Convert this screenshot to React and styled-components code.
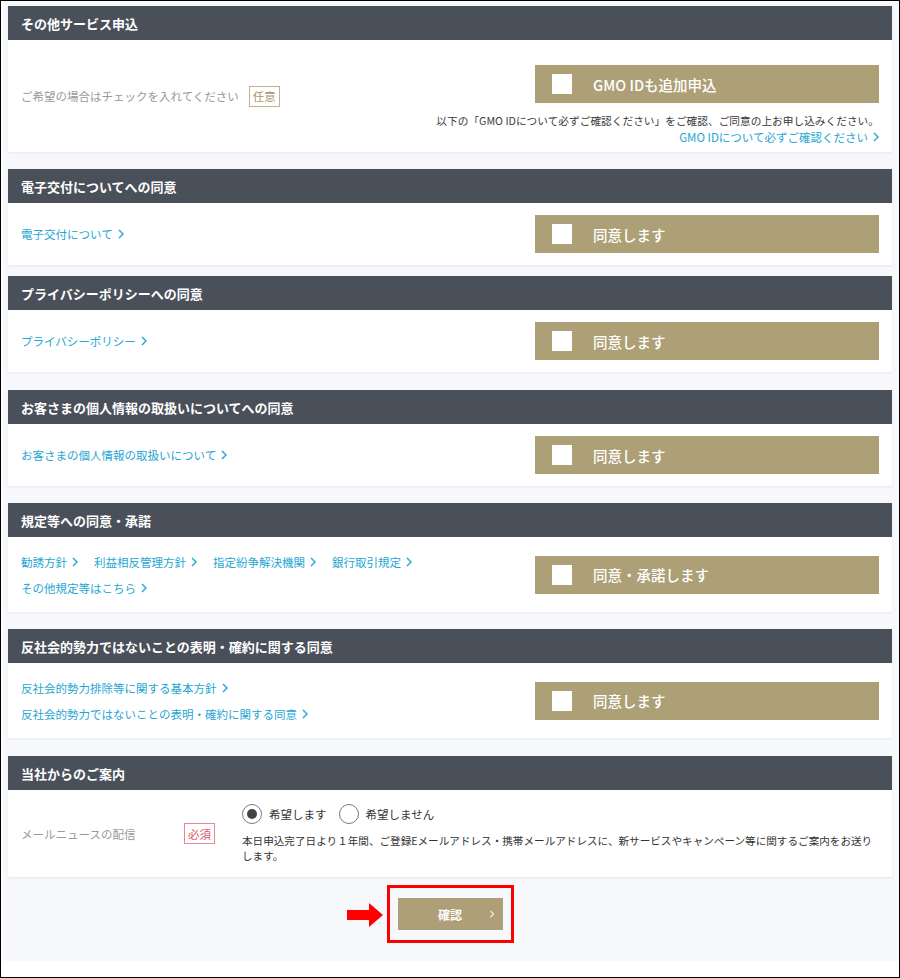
import React from 'react'
import styled, { createGlobalStyle } from 'styled-components'

const GlobalStyle = createGlobalStyle`
  html, body {
    margin: 0;
    padding: 0;
    background: #fff;
  }
  body {
    font-family: "Noto Sans CJK JP", "Noto Sans", sans-serif;
  }
`

const Chevron = ({ color = '#1fa6d4' }) => (
    <svg width="6" height="10" viewBox="0 0 6 10">
        <path d="M1 1 L5 5 L1 9" fill="none" stroke={color} strokeWidth="1.4" />
    </svg>
)

function CheckButton({ label }) {
    return (
        <AgreeButton type="button">
            <Box />
            <span>{label}</span>
        </AgreeButton>
    )
}

function Links({ items }) {
    return (
        <LinkRow>
            {items.map((t) => (
                <LinkItem key={t}>
                    {t}
                    <Chevron />
                </LinkItem>
            ))}
        </LinkRow>
    )
}

function Radio({ checked, label }) {
    return (
        <RadioItem>
            <Circle $checked={checked} />
            {label}
        </RadioItem>
    )
}

export default function App() {
    return (
        <Frame>
            <GlobalStyle />
            <Page>
                <Card>
                    <Header>その他サービス申込</Header>
                    <Body $h={112}>
                        <Label>
                            ご希望の場合はチェックを入れてください
                            <Badge>任意</Badge>
                        </Label>
                        <RightCol>
                            <CheckButton label="GMO IDも追加申込" />
                            <Note>以下の「GMO IDについて必ずご確認ください」をご確認、ご同意の上お申し込みください。</Note>
                            <LinkItem>
                                GMO IDについて必ずご確認ください
                                <Chevron />
                            </LinkItem>
                        </RightCol>
                    </Body>
                </Card>

                <Card>
                    <Header>電子交付についてへの同意</Header>
                    <Body $h={62}>
                        <Links items={['電子交付について']} />
                        <CheckButton label="同意します" />
                    </Body>
                </Card>

                <Card $gap={11}>
                    <Header>プライバシーポリシーへの同意</Header>
                    <Body $h={62}>
                        <Links items={['プライバシーポリシー']} />
                        <CheckButton label="同意します" />
                    </Body>
                </Card>

                <Card $gap={18}>
                    <Header>お客さまの個人情報の取扱いについてへの同意</Header>
                    <Body $h={62}>
                        <Links items={['お客さまの個人情報の取扱いについて']} />
                        <CheckButton label="同意します" />
                    </Body>
                </Card>

                <Card>
                    <Header>規定等への同意・承諾</Header>
                    <Body $h={75}>
                        <Links items={['勧誘方針', '利益相反管理方針', '指定紛争解決機関', '銀行取引規定', 'その他規定等はこちら']} />
                        <CheckButton label="同意・承諾します" />
                    </Body>
                </Card>

                <Card>
                    <Header>反社会的勢力ではないことの表明・確約に関する同意</Header>
                    <Body $h={75}>
                        <Links items={['反社会的勢力排除等に関する基本方針', '反社会的勢力ではないことの表明・確約に関する同意']} />
                        <CheckButton label="同意します" />
                    </Body>
                </Card>

                <Card $gap={18}>
                    <Header>当社からのご案内</Header>
                    <MailBody>
                        <FieldLabel>メールニュースの配信</FieldLabel>
                        <RequiredBadge>必須</RequiredBadge>
                        <MailCol>
                            <RadioRow>
                                <Radio checked label="希望します" />
                                <Radio label="希望しません" />
                            </RadioRow>
                            <Desc>
                                本日申込完了日より１年間、ご登録Eメールアドレス・携帯メールアドレスに、新サービスやキャンペーン等に関するご案内をお送りします。
                            </Desc>
                        </MailCol>
                    </MailBody>
                </Card>

                <Footer>
                    <Highlight>
                        <Arrow width="36" height="24" viewBox="0 0 36 24">
                            <path d="M0 7 H22 V0 L36 12 L22 24 V17 H0 Z" fill="#f00" />
                        </Arrow>
                        <ConfirmButton type="button">
                            確認
                            <ConfirmChevron>
                                <Chevron color="#f4f1ea" />
                            </ConfirmChevron>
                        </ConfirmButton>
                    </Highlight>
                </Footer>
            </Page>
        </Frame>
    )
}

const Frame = styled.div`
    box-sizing: border-box;
    width: 900px;
    height: 978px;
    border: 1px solid #000;
    padding: 1px 0 16px 2px;
    background: #fff;
`

const Page = styled.div`
    height: 100%;
    box-sizing: border-box;
    background: #f7f8fb;
    padding: 4px 7px 0 5px;
    display: flex;
    flex-direction: column;
`

const Card = styled.section`
    background: #fff;
    margin-top: ${(p) => (p.$gap !== undefined ? p.$gap : 17)}px;
    box-shadow: 0 1px 2px rgba(0, 0, 0, 0.07);

    &:first-child {
        margin-top: 0;
    }
`

const Header = styled.h2`
    margin: 0;
    height: 34px;
    display: flex;
    align-items: center;
    padding-left: 13px;
    background: #4a5059;
    color: #fff;
    font-size: 13px;
    font-weight: 700;
`

const Body = styled.div`
    box-sizing: border-box;
    height: ${(p) => p.$h}px;
    display: flex;
    align-items: center;
    justify-content: space-between;
    padding: 0 13px;
`

const Label = styled.div`
    display: flex;
    align-items: center;
    gap: 10px;
    color: #9a9a9a;
    font-size: 11.5px;
`

const Badge = styled.span`
    box-sizing: border-box;
    height: 21px;
    padding: 0 3px;
    display: flex;
    align-items: center;
    justify-content: center;
    white-space: nowrap;
    border: 1px solid #c2b188;
    color: #a8966a;
    font-size: 11.5px;
`

const RequiredBadge = styled(Badge)`
    border-color: #e58a93;
    color: #e0586a;
    width: 31px;
    padding: 0;
`

const RightCol = styled.div`
    align-self: flex-start;
    padding-top: 25px;
    display: flex;
    flex-direction: column;
    align-items: flex-end;

    > a {
        line-height: 16px;
    }
`

const Note = styled.div`
    margin-top: 10px;
    font-size: 10.7px;
    line-height: 16px;
    color: #3a3a3a;
`

const AgreeButton = styled.button`
    box-sizing: border-box;
    width: 344px;
    height: 38px;
    display: flex;
    align-items: center;
    padding: 0 0 0 17px;
    border: none;
    background: #ad9f76;
    color: #fff;
    font-family: inherit;
    font-size: 14.5px;
    font-weight: 500;
    cursor: pointer;

    span {
        margin-left: 21px;
    }
`

const Box = styled.i`
    width: 20px;
    height: 20px;
    background: #fff;
`

const LinkRow = styled.div`
    display: flex;
    flex-wrap: wrap;
    column-gap: 16px;
    max-width: 420px;
`

const LinkItem = styled.a`
    display: inline-flex;
    align-items: center;
    gap: 5px;
    color: #1fa6d4;
    font-size: 11.5px;
    line-height: 26px;
    cursor: pointer;
`

const MailBody = styled.div`
    box-sizing: border-box;
    height: 87px;
    display: flex;
    align-items: center;
    padding: 0 13px;
`

const FieldLabel = styled.div`
    width: 163px;
    color: #9a9a9a;
    font-size: 11.5px;
`

const MailCol = styled.div`
    margin-left: 27px;
    flex: 1;
    display: flex;
    flex-direction: column;
`

const RadioRow = styled.div`
    display: flex;
    gap: 12px;
`

const RadioItem = styled.label`
    display: flex;
    align-items: center;
    gap: 7px;
    font-size: 11.5px;
    color: #333;
`

const Circle = styled.span`
    box-sizing: border-box;
    width: 20px;
    height: 20px;
    border-radius: 50%;
    border: 1px solid #7a7a7a;
    display: flex;
    align-items: center;
    justify-content: center;

    &::after {
        content: '';
        width: 10px;
        height: 10px;
        border-radius: 50%;
        background: #444;
        display: ${(p) => (p.$checked ? 'block' : 'none')};
    }
`

const Desc = styled.p`
    margin: 9px 0 0;
    font-size: 10.6px;
    line-height: 15px;
    color: #333;
`

const Footer = styled.div`
    margin-top: 8px;
    display: flex;
    justify-content: center;
`

const Highlight = styled.div`
    position: relative;
    box-sizing: border-box;
    border: 3px solid #f00;
    padding: 10px 8px;
`

const Arrow = styled.svg`
    position: absolute;
    right: calc(100% + 7px);
    top: 15px;
`

const ConfirmButton = styled.button`
    position: relative;
    width: 105px;
    height: 32px;
    border: none;
    background: #ae9f78;
    color: #fff;
    font-family: inherit;
    font-size: 12px;
    font-weight: 700;
    display: flex;
    align-items: center;
    justify-content: center;
    cursor: pointer;
`

const ConfirmChevron = styled.span`
    position: absolute;
    right: 8px;
    top: 50%;
    margin-top: -5px;
    display: flex;
    transform: scale(0.8);
`
